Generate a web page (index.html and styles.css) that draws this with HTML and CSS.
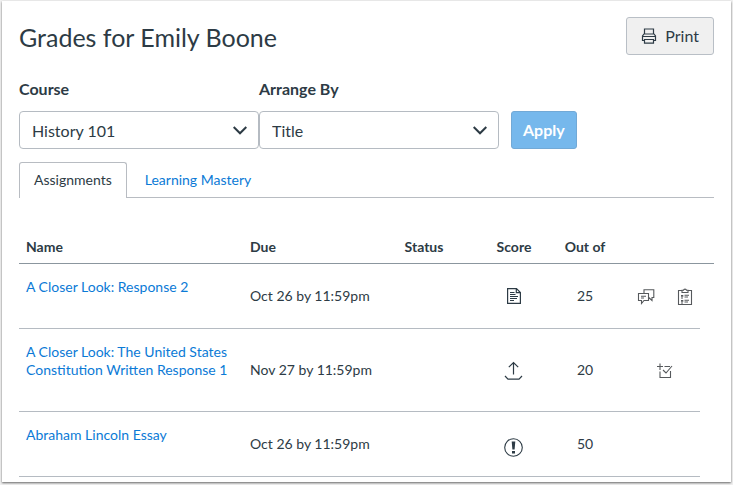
FILE: index.html
```html
<!DOCTYPE html>
<html lang="en">
<head>
<meta charset="utf-8">
<title>Grades for Emily Boone</title>
<link rel="stylesheet" href="styles.css">
</head>
<body>
<main class="page">
  <header class="page-header">
    <h1>Grades for Emily Boone</h1>
    <button class="btn btn-print" type="button">
      <svg width="16" height="16" viewBox="0 0 16 16" fill="none" stroke="currentColor" stroke-width="1.2" aria-hidden="true"><path d="M3.5 6V1H12.5V6M3.5 12.5H1.5V8L3 6H13L14.5 8V12.5H12.5M1.5 8.5H14.5M3.5 11.5H12.5V15.2H3.5Z"/></svg>
      Print
    </button>
  </header>

  <form class="filters">
    <div class="field">
      <label for="course">Course</label>
      <div class="select">
        <select id="course"><option>History 101</option></select>
        <svg class="chevron" width="14" height="9" viewBox="0 0 14 9" fill="none" stroke="currentColor" stroke-width="2" aria-hidden="true"><path d="M.7 1L7 7.3L13.3 1"/></svg>
      </div>
    </div>
    <div class="field">
      <label for="arrange">Arrange By</label>
      <div class="select">
        <select id="arrange"><option>Title</option></select>
        <svg class="chevron" width="14" height="9" viewBox="0 0 14 9" fill="none" stroke="currentColor" stroke-width="2" aria-hidden="true"><path d="M.7 1L7 7.3L13.3 1"/></svg>
      </div>
    </div>
    <button class="btn btn-apply" type="button">Apply</button>
  </form>

  <nav class="tabs">
    <a class="tab active" href="#assignments">Assignments</a>
    <a class="tab" href="#mastery">Learning Mastery</a>
  </nav>

  <table class="grades" id="assignments">
    <colgroup>
      <col class="c-name"><col class="c-due"><col class="c-status"><col class="c-score"><col class="c-outof"><col><col class="c-end">
    </colgroup>
    <thead>
      <tr><th class="text">Name</th><th class="text">Due</th><th>Status</th><th>Score</th><th>Out of</th><th></th><th></th></tr>
    </thead>
    <tbody>
      <tr>
        <td class="name"><a href="#a1">A Closer Look: Response 2</a></td>
        <td class="text">Oct 26 by 11:59pm</td>
        <td></td>
        <td><svg width="16" height="18" viewBox="0 0 16 18" fill="none" stroke="currentColor" stroke-width="1.2" aria-label="Text entry"><path d="M1.6 1.6H10.5L14.4 5.5V16.4H1.6ZM10.3 1.6V5.7H14.4M4 5.5H8.5M4 7.5H9.5M4 9.5H12M4 11.5H11M4 13.5H8"/></svg></td>
        <td>25</td>
        <td class="actions"><div class="icons">
          <button class="icon" type="button" aria-label="Comments"><svg width="18" height="18" viewBox="0 0 18 18" fill="none" stroke="currentColor" stroke-width="1.1"><path d="M1.5 5.5H11.5V12.5H7L4.5 15.5V12.5H1.5ZM4 8.2H9M4 10H7M7 5.5V1.7H16.8V9.5H15V12.5L11.7 9.5"/></svg></button>
          <button class="icon" type="button" aria-label="Rubric"><svg width="16" height="18" viewBox="0 0 16 18" fill="none" stroke="currentColor" stroke-width="1.1"><path d="M5 2.5H1.5V16.5H14.5V2.5H11M5 4.5V2.3H6.5C6.7.7 9.3.7 9.5 2.3H11V4.5Z"/><path stroke-width="1.8" d="M4 7.8H6.3M4 12.8H6.3"/><path d="M7.5 7.3H12M7.5 9H11M4 10H6M7.5 12.3H12M7.5 14H11M4 15H6"/></svg></button>
        </div></td>
      </tr>
      <tr>
        <td class="name"><a href="#a2">A Closer Look: The United States Constitution Written Response 1</a></td>
        <td class="text">Nov 27 by 11:59pm</td>
        <td></td>
        <td><svg width="20" height="20" viewBox="0 0 20 20" fill="none" stroke="currentColor" stroke-width="1.2" aria-label="File upload"><path d="M9.5 14.5V2.5M4.8 7.2L9.5 2.5L14.2 7.2M1 16L4 19.2H15L18 16"/></svg></td>
        <td>20</td>
        <td class="actions"><div class="icons">
          <button class="icon" type="button" aria-label="Score details"><svg width="18" height="18" viewBox="0 0 18 18" fill="none" stroke="currentColor" stroke-width="1.1"><path d="M1 4.5H7M4 1.5V8M4 9.5V15.5H14.5V9M8.5 4.5H14M7 8L10 11L16 4"/></svg></button>
        </div></td>
      </tr>
      <tr>
        <td class="name"><a href="#a3">Abraham Lincoln Essay</a></td>
        <td class="text">Oct 26 by 11:59pm</td>
        <td></td>
        <td class="alert"><svg width="20" height="20" viewBox="0 0 20 20" fill="none" stroke="currentColor" stroke-width="1.1" aria-label="Attention"><circle cx="9.5" cy="10.5" r="8.8"/><path fill="currentColor" stroke="none" d="M7.7 4.5H11.3L10.6 12.5H8.4ZM8 14H11V16.5H8Z"/></svg></td>
        <td>50</td>
        <td></td>
      </tr>
    </tbody>
  </table>
</main>
</body>
</html>
```
FILE: styles.css
```css
* { box-sizing: border-box; }

body {
  margin: 0;
  padding: 1px 2px 3px;
  background: #f1f1f1;
  color: #2d3b45;
  font: 14px/18px Lato, "Liberation Sans", sans-serif;
}

.page {
  padding: 16px 17px 5px;
  background: #fff;
  box-shadow: 0 1px 2px #666;
}

.page-header {
  display: flex;
  justify-content: space-between;
}

h1 {
  margin: 0;
  font-size: 25px;
  font-weight: 400;
  line-height: 40px;
}

button, select { font: inherit; color: inherit; }

.btn {
  height: 38px;
  border: 1px solid #b9bfc6;
  border-radius: 3px;
  font-size: 16px;
}

.btn-print {
  display: flex;
  align-items: center;
  gap: 8px;
  padding: 0 14px;
  background: #f0f0f0;
}

.btn-apply {
  margin-left: 12px;
  padding: 0 11px;
  border-color: #72a9d6;
  background: #76b8ec;
  color: #fff;
  font-weight: 700;
}

.filters {
  display: flex;
  align-items: flex-end;
  margin-top: 22px;
}

.field { width: 240px; }

.field label {
  display: block;
  margin-bottom: 12px;
  font-size: 16px;
  font-weight: 700;
  line-height: 20px;
}

.select { display: grid; align-items: center; }
.select > * { grid-area: 1 / 1; }

select {
  width: 100%;
  height: 38px;
  padding: 2px 12px 0;
  border: 1px solid #b5bbc2;
  border-radius: 4px;
  appearance: none;
  background: #fff;
  font-size: 16px;
}

.chevron {
  justify-self: end;
  margin-right: 12px;
  pointer-events: none;
}

.tabs {
  display: flex;
  margin-top: 13px;
  border-bottom: 1px solid #b8bcc2;
}

.tab {
  margin-bottom: -1px;
  padding: 8px 14px 9px;
  border: 1px solid transparent;
  border-bottom: 0;
}

.tab.active {
  margin-right: 3px;
  border-color: #b8bcc2;
  border-radius: 3px 3px 0 0;
  background: #fff;
  color: #2d3b45;
}

a { color: #0b7ad6; text-decoration: none; }

.grades {
  width: 100%;
  margin-top: 33px;
  border-collapse: separate;
  border-spacing: 0;
  table-layout: fixed;
}

.c-name { width: 224px; }
.c-due { width: 136px; }
.c-status, .c-score { width: 90px; }
.c-outof { width: 52px; }
.c-end { width: 14px; }

th {
  height: 33px;
  padding: 0;
  border-bottom: 1px solid #8b969e;
}

td {
  padding: 0;
  border-bottom: 1px solid #b5bbc2;
  text-align: center;
}

td.name {
  padding: 14px 7px 32px;
  text-align: left;
  vertical-align: top;
}

.text { padding-left: 7px; text-align: left; white-space: nowrap; }

td svg { display: block; margin: 0 auto; }

td.alert { padding-top: 6px; }

td.actions { padding: 2px 0 0 18px; }

.icons {
  display: flex;
  justify-content: center;
  gap: 22px;
}

.icon {
  padding: 0;
  border: 0;
  background: none;
  color: #56595c;
}
```
